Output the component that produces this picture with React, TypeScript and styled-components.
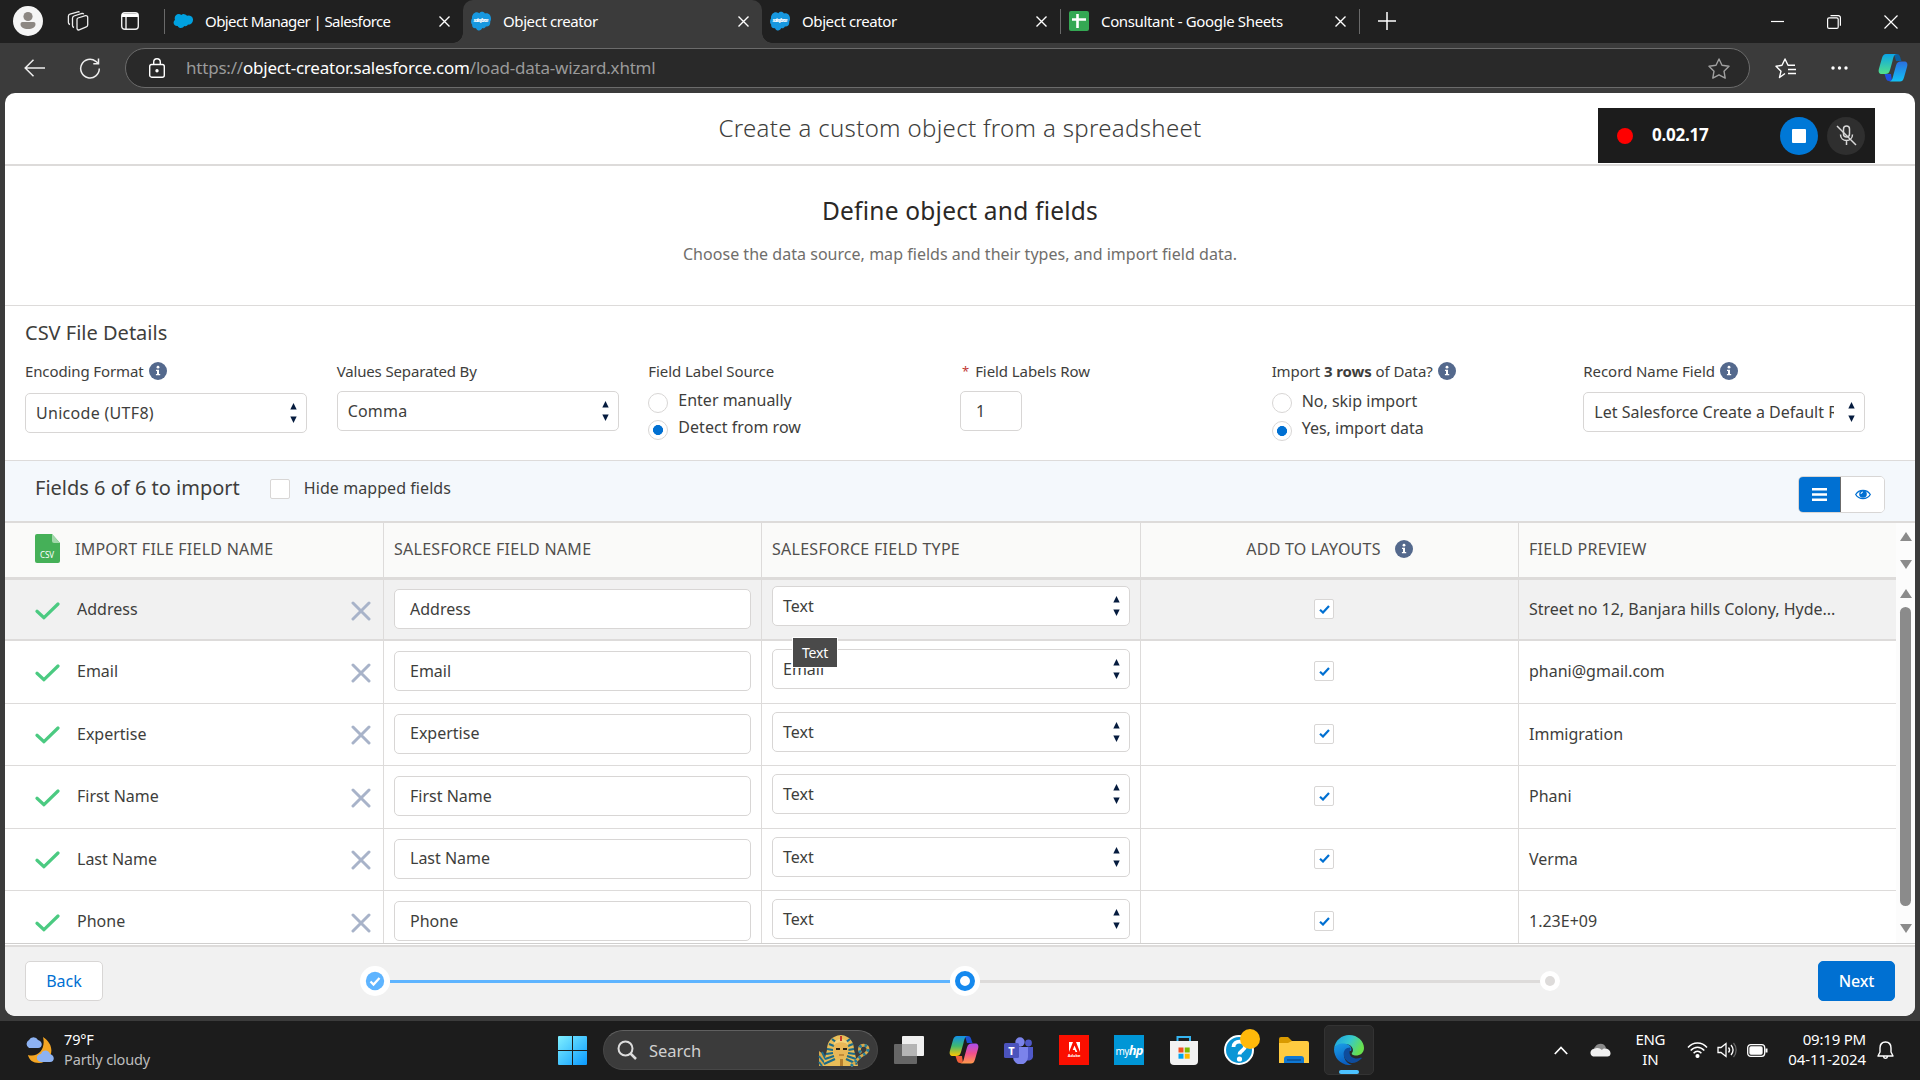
import React from "react";
import styled, { createGlobalStyle, css } from "styled-components";

const Global = createGlobalStyle`
  * { box-sizing: border-box; }
  html, body { margin: 0; padding: 0; background: #3b3b3b; }
  body { width: 1920px; height: 1080px; overflow: hidden; font-family: "Noto Sans", "Open Sans", sans-serif; }
  svg { display: block; flex: none; }
`;

const Screen = styled.div`
  width: 1920px;
  height: 1080px;
  display: flex;
  flex-direction: column;
  background: #3b3b3b;
  overflow: hidden;
`;

/* ---------- shared text ---------- */
const Label = styled.span<{ $size?: number; $track?: number; $color?: string; $weight?: number }>`
  font-size: ${(p) => p.$size ?? 16}px;
  letter-spacing: ${(p) => p.$track ?? 0}px;
  color: ${(p) => p.$color ?? "#3e3e3c"};
  font-weight: ${(p) => p.$weight ?? 400};
  line-height: 20px;
  white-space: nowrap;
`;

/* ---------- browser chrome ---------- */
const TabStrip = styled.div`
  height: 43px;
  background: #202020;
  display: flex;
  flex: none;
  padding-left: 13px;
`;
const StripTools = styled.div`
  width: 151px;
  display: flex;
  align-items: center;
  padding-bottom: 1px;
  flex: none;
`;
const ToolSlot = styled.div<{ $ml: number }>`
  margin-left: ${(p) => p.$ml}px;
`;
const Tab = styled.div<{ $width: number; $active?: boolean }>`
  width: ${(p) => p.$width}px;
  display: flex;
  align-items: center;
  flex: none;
  padding: 0 13px 1px 8px;
  color: #fff;
  ${(p) => p.$active && css`
    position: relative;
    background: #3b3b3b;
    border-radius: 10px 10px 0 0;
    &::before, &::after {
      content: "";
      position: absolute;
      bottom: 0;
      width: 10px;
      height: 10px;
    }
    &::before { left: -10px; background: radial-gradient(circle at 0 0, transparent 9.5px, #3b3b3b 10px); }
    &::after { right: -10px; background: radial-gradient(circle at 100% 0, transparent 9.5px, #3b3b3b 10px); }
  `}
`;
const TabTitle = styled.span<{ $track: number }>`
  flex: 1;
  margin-left: 12px;
  margin-top: -1px;
  font-size: 15px;
  letter-spacing: ${(p) => p.$track}px;
  white-space: nowrap;
`;
const StripRule = styled.div`
  width: 1px;
  height: 25px;
  margin-top: 9px;
  background: #6a6a6a;
  flex: none;
`;
const WindowButtons = styled.div`
  margin-left: auto;
  display: flex;
  align-items: center;
  gap: 43px;
  padding-right: 22px;
`;
const NewTab = styled.div`
  margin: 12px 0 0 18px;
`;
const Toolbar = styled.div`
  height: 50px;
  flex: none;
  display: flex;
  align-items: center;
  padding: 0 12px 0 24px;
`;
const AddressBar = styled.div`
  width: 1625px;
  height: 40px;
  margin-left: 24px;
  border: 1px solid #6b6b6b;
  border-radius: 20px;
  background: #292929;
  display: flex;
  align-items: center;
  padding: 0 19px 0 23px;
  flex: none;
`;
const Url = styled.div`
  flex: 1;
  margin-left: 21px;
  margin-top: -2px;
  font-size: 17px;
  letter-spacing: -0.21px;
  color: #9a9a9a;
  white-space: nowrap;
  b { font-weight: 400; color: #fff; }
`;
const ToolbarRight = styled.div`
  display: flex;
  align-items: center;
  margin-left: 25px;
  gap: 35px;
`;
const CopilotSlot = styled.div`
  margin-left: -5px;
`;

/* ---------- page ---------- */
const Page = styled.main`
  width: 1910px;
  height: 923px;
  margin-left: 5px;
  background: #fff;
  border-radius: 10px;
  overflow: hidden;
  display: flex;
  flex-direction: column;
  flex: none;
  position: relative;
`;
const TitleBar = styled.header`
  height: 73px;
  flex: none;
  border-bottom: 2px solid #dddbda;
  display: flex;
  justify-content: center;
  align-items: center;
`;
const PageTitle = styled.h1`
  margin: 0 0 3px;
  font-size: 24px;
  font-weight: 300;
  letter-spacing: 0.33px;
  color: #3e3e3c;
  white-space: nowrap;
`;
const Intro = styled.section`
  height: 140px;
  flex: none;
  border-bottom: 1px solid #dddbda;
  display: flex;
  flex-direction: column;
  align-items: center;
  padding-top: 29px;
`;
const IntroTitle = styled.h2`
  margin: 0 0 17px;
  font-size: 24.5px;
  letter-spacing: 0.22px;
  line-height: 32px;
  font-weight: 400;
  color: #2b2826;
  white-space: nowrap;
`;
const Details = styled.section`
  height: 155px;
  flex: none;
  padding: 15px 20px 0;
  border-bottom: 1px solid #dddbda;
`;
const DetailsTitle = styled.h3`
  margin: 0;
  font-size: 20px;
  line-height: 24px;
  font-weight: 400;
  color: #3e3e3c;
`;
const DetailGrid = styled.div`
  margin-top: 15px;
  display: grid;
  grid-template-columns: repeat(6, 311.67px);
`;
const Field = styled.div`
  display: flex;
  flex-direction: column;
`;
const FieldLabel = styled.div`
  height: 22px;
  display: flex;
  align-items: center;
  gap: 5px;
`;
const SelectBox = styled.div<{ $top?: number; $width?: string }>`
  width: ${(p) => p.$width ?? "282px"};
  height: 40px;
  margin-top: ${(p) => p.$top ?? 0}px;
  border: 1px solid #d8d6d5;
  border-radius: 5px;
  background: #fff;
  display: flex;
  align-items: center;
  justify-content: space-between;
  padding: 0 9px 0 10px;
`;
const Clip = styled.div<{ $max?: number }>`
  max-width: ${(p) => p.$max ?? 300}px;
  overflow: hidden;
  display: flex;
`;
const SmallInput = styled.div`
  width: 62px;
  height: 40px;
  margin-top: 9px;
  border: 1px solid #d8d6d5;
  border-radius: 5px;
  display: flex;
  align-items: center;
  padding-left: 15px;
`;
const Required = styled.span`
  color: #c23934;
  font-size: 13px;
  line-height: 20px;
  margin: 0 1px 0 2px;
`;
const RadioRow = styled.div<{ $top: number; $lift: number }>`
  display: flex;
  align-items: center;
  gap: 10px;
  height: 20px;
  margin-top: ${(p) => p.$top}px;
  span { margin-top: ${(p) => -p.$lift * 2}px; }
`;
const Radio = styled.i<{ $on?: boolean }>`
  width: 20px;
  height: 20px;
  border: 1px solid #d8d6d5;
  border-radius: 50%;
  background: ${(p) => (p.$on ? "radial-gradient(circle, #0070d2 0 4.7px, #fff 5.3px)" : "#fff")};
`;
const Filter = styled.section`
  height: 62px;
  flex: none;
  background: #f4f8fc;
  border-bottom: 2px solid #dddbda;
  display: flex;
  padding: 0 30px;
`;
const FilterLeft = styled.div`
  display: flex;
  align-items: center;
  height: 53px;
`;
const CheckBox = styled.div`
  width: 20px;
  height: 20px;
  border: 1px solid #d8d6d5;
  border-radius: 2px;
  background: #fff;
  display: flex;
  align-items: center;
  justify-content: center;
`;
const HideBox = styled(CheckBox)`
  margin: 3px 14px 0 30px;
`;
const Toggle = styled.div`
  margin: 15px 0 0 auto;
  width: 87px;
  height: 37px;
  display: flex;
  border: 1px solid #d8d6d5;
  border-radius: 5px;
  overflow: hidden;
`;
const ToggleItem = styled.div<{ $on?: boolean }>`
  width: ${(p) => (p.$on ? 42 : 43)}px;
  display: flex;
  align-items: center;
  justify-content: center;
  background: ${(p) => (p.$on ? "#0070d2" : "#fff")};
  border-right: ${(p) => (p.$on ? "1px solid #6b6b6b" : "0")};
`;

/* ---------- table ---------- */
const TableArea = styled.section`
  height: 421px;
  flex: none;
  display: flex;
  border-bottom: 1px solid #d0cfce;
`;
const Table = styled.div`
  width: 1891px;
  overflow: hidden;
`;
const rowGrid = css`
  display: grid;
  grid-template-columns: 379px 378px 379px 378px 377px;
`;
const HeadRow = styled.div`
  ${rowGrid}
  height: 57px;
  background: #fafaf9;
  border-bottom: 3px solid #dddbda;
`;
const Row = styled.div<{ $hover?: boolean }>`
  ${rowGrid}
  height: ${(p) => (p.$hover ? 61 : 62.5)}px;
  background: ${(p) => (p.$hover ? "#f1f1f1" : "#fff")};
  border-bottom: ${(p) => (p.$hover ? 2 : 1)}px solid #dddbda;
`;
const Cell = styled.div<{ $center?: boolean; $last?: boolean }>`
  padding: 0 10px 1px;
  display: flex;
  align-items: center;
  justify-content: ${(p) => (p.$center ? "center" : "flex-start")};
  border-right: ${(p) => (p.$last ? 0 : 1)}px solid #dddbda;
`;
const HeadCell = styled(Cell)`
  padding-bottom: 3px;
`;
const NameCell = styled(Cell)`
  padding: 0 12px 1px 30px;
  > span { flex: 1; }
`;
const NameHead = styled(NameCell)`
  padding-bottom: 3px;
`;
const TopCell = styled(Cell)<{ $pad: number }>`
  align-items: flex-start;
  padding-top: ${(p) => p.$pad}px;
`;
const TextInput = styled.div`
  width: 358px;
  height: 40px;
  border: 1px solid #d8d6d5;
  border-radius: 5px;
  background: #fff;
  display: flex;
  align-items: center;
  padding: 0 15px 1px;
`;
const CheckSlot = styled.div`
  margin-right: 11px;
`;
const HeadIcon = styled.div`
  margin-right: 15px;
`;
const RowIcon = styled.div<{ $mr?: number }>`
  margin: 3px ${(p) => p.$mr ?? 0}px 0 0;
`;
const InfoSlot = styled.div`
  margin-left: 14px;
`;
const ScrollColumn = styled.div`
  width: 19px;
  background: #fcfcfc;
  display: flex;
  flex-direction: column;
  align-items: center;
`;
const Arrow = styled.i<{ $down?: boolean; $mt: number }>`
  margin-top: ${(p) => p.$mt}px;
  border: 6px solid transparent;
  border-${(p) => (p.$down ? "bottom" : "top")}: 0;
  border-${(p) => (p.$down ? "top" : "bottom")}: 9px solid #8b8b8b;
  flex: none;
`;
const Thumb = styled.i`
  width: 11px;
  height: 299px;
  margin-top: 9px;
  border-radius: 6px;
  background: #8b8b8b;
  flex: none;
`;
const Tooltip = styled.div`
  position: absolute;
  left: 787px;
  top: 544px;
  width: 46px;
  height: 31px;
  background: #4a4a4a;
  border: 1px solid #fff;
  display: flex;
  align-items: center;
  justify-content: center;
`;

/* ---------- wizard footer ---------- */
const Footer = styled.footer`
  height: 71px;
  margin-top: 1px;
  flex: none;
  border-top: 2px solid #dddbda;
  background: #f1f1f1;
  display: flex;
  align-items: center;
  padding: 0 20px 1px;
`;
const Button = styled.div<{ $primary?: boolean }>`
  width: ${(p) => (p.$primary ? 77 : 78)}px;
  height: 40px;
  border: 1px solid ${(p) => (p.$primary ? "#0070d2" : "#d8d6d5")};
  border-radius: 5px;
  background: ${(p) => (p.$primary ? "#0070d2" : "#fff")};
  display: flex;
  align-items: center;
  justify-content: center;
  flex: none;
`;
const Progress = styled.div`
  display: flex;
  align-items: center;
  margin: 0 auto 0 257px;
`;
const Line = styled.i<{ $done?: boolean; $width: number }>`
  width: ${(p) => p.$width}px;
  height: 3px;
  background: ${(p) => (p.$done ? "#5eb4ff" : "#dddbda")};
`;

/* ---------- recorder overlay ---------- */
const Recorder = styled.div`
  position: absolute;
  left: 1593px;
  top: 15px;
  width: 277px;
  height: 55px;
  background: #1c1c1c;
  display: flex;
  align-items: center;
  padding: 0 10px 0 19px;
`;
const RecDot = styled.i`
  width: 16px;
  height: 16px;
  border-radius: 50%;
  background: #f00;
  margin-right: 19px;
`;
const RoundButton = styled.div<{ $bg: string }>`
  width: 38px;
  height: 38px;
  border-radius: 50%;
  background: ${(p) => p.$bg};
  display: flex;
  align-items: center;
  justify-content: center;
`;
const StopSquare = styled.i`
  width: 14px;
  height: 14px;
  border-radius: 1px;
  background: #fff;
`;
const RecTime = styled.span`
  flex: 1;
  color: #fff;
  font-size: 17px;
  font-weight: 700;
  letter-spacing: -0.25px;
  margin-top: -2px;
`;
const RecButtons = styled.div`
  display: flex;
  gap: 9px;
`;

/* ---------- taskbar ---------- */
const Taskbar = styled.div`
  height: 59px;
  margin-top: 5px;
  background: #1c1c1c;
  flex: none;
  display: flex;
  align-items: center;
  padding: 0 26px 1px 24px;
`;
const Weather = styled.div`
  width: 534px;
  display: flex;
  gap: 9px;
  align-items: center;
`;
const Stack = styled.div<{ $align?: string }>`
  display: flex;
  flex-direction: column;
  align-items: ${(p) => p.$align ?? "flex-start"};
  margin-top: -2px;
`;
const SearchPill = styled.div`
  width: 275px;
  height: 40px;
  margin: 0 8px 0 16px;
  border-radius: 20px;
  background: #3b3b3b;
  border: 1px solid #474747;
  border-top-color: #606060;
  display: flex;
  align-items: center;
  padding: 0 7px 0 13px;
  flex: none;
`;
const SearchText = styled.span`
  flex: 1;
  margin-left: 12px;
  font-size: 16.5px;
  color: #d0d0d0;
`;
const Apps = styled.div`
  display: flex;
  gap: 5px;
  margin-left: -2px;
`;
const AppTile = styled.div<{ $active?: boolean }>`
  width: 50px;
  height: 50px;
  border-radius: 5px;
  display: flex;
  align-items: center;
  justify-content: center;
  position: relative;
  ${(p) => p.$active && css`
    background: #292929;
    border: 1px solid #333;
    &::after {
      content: "";
      position: absolute;
      left: 14px;
      bottom: 0;
      width: 20px;
      height: 4px;
      border-radius: 2px;
      background: #4cc2ff;
    }
  `}
`;
const Square = styled.div<{ $bg: string }>`
  width: 30px;
  height: 30px;
  background: ${(p) => p.$bg};
  display: flex;
  flex-direction: column;
  align-items: center;
  justify-content: center;
  color: #fff;
`;
const HpText = styled.span`
  font-size: 10px;
  letter-spacing: -0.6px;
  line-height: 14px;
  i { font-weight: 700; font-size: 13px; letter-spacing: -1px; }
`;
const AdobeText = styled.span`
  font-size: 4px;
  font-weight: 700;
  line-height: 5px;
`;
const Tray = styled.div`
  margin-left: auto;
  display: flex;
  align-items: center;
`;
const TraySlot = styled.div<{ $mr: number }>`
  margin-right: ${(p) => p.$mr}px;
`;

/* ---------- icons ---------- */
const Close = () => (
  <svg width="11" height="11" viewBox="0 0 11 11" stroke="#fff" strokeWidth="1.4"><path d="M.5.5l10 10M10.5.5l-10 10" /></svg>
);
const Cloud = ({ wordmark }: { wordmark?: boolean }) => (
  wordmark ? (
    <svg width="20" height="20" viewBox="0 0 20 20">
      <path fill="#1798e0" d="M8.300 2.200c1.600-2 4.500-1.900 5.700.3 3.200-1 6 1.400 6 5 0 1.500-.3 2.300-.8 3.200.5 3.300-1.700 5.300-4.300 4.800-.8 1.600-2.200 2.100-3.700 1.500-.9 3.200-5 3.400-6.200.2-2.400.5-4.200-1-3.800-3.600C-.3 12.300-.3 9.200 1 7.600.4 3 5-.6 8.300 2.200z" />
      <text x="10" y="11" textAnchor="middle" fontSize="5" fontWeight="700" fontStyle="italic" fill="#fff" textLength="15">salesforce</text>
    </svg>
  ) : (
    <svg width="20" height="16" viewBox="0 0 20 16">
      <path fill="#00a1e0" d="M8.3 1.9A4 4 0 0 1 14 2.8a4.3 4.3 0 0 1 6 4.3c0 3-2.500 5-5 4.500-.8 1.400-2.300 1.900-3.800 1.300-.9 2.400-5.200 2.900-6.500 0C2.300 13.200.6 11.600.6 9.700c0-1.200.5-2.200 1.400-2.800C.4 2.600 5-.5 8.300 1.900z" />
    </svg>
  )
);
const Sheets = () => (
  <svg width="20" height="20" viewBox="0 0 20 20"><rect width="20" height="20" rx="2" fill="#34a853" /><path d="M8.500 3v14M3 8.500h14" stroke="#fff" strokeWidth="2.600" /></svg>
);
const Info = () => (
  <svg width="18" height="18" viewBox="0 0 18 18"><circle cx="9" cy="9" r="9" fill="#54698d" /><circle cx="9" cy="5.200" r="1.400" fill="#fff" /><path d="M7 7.700h3v4.300h1.200v1.300H6.900V12H8V9H7z" fill="#fff" /></svg>
);
const Updown = () => (
  <svg width="7" height="20" viewBox="0 0 7 20" fill="#061c3f"><path d="M3.500 0L6.700 6.500H.3zM3.500 20L.3 13.500h6.400z" /></svg>
);
const Tick = () => (
  <svg width="11" height="9" viewBox="0 0 11 9" fill="none" stroke="#0070d2" strokeWidth="2.200"><path d="M1 4.700L4 7.500 10 1" /></svg>
);
const GreenTick = () => (
  <svg width="25" height="18" viewBox="0 0 25 18" fill="none" stroke="#4bca81" strokeWidth="3.200" strokeLinecap="round" strokeLinejoin="round"><path d="M2 9.300L9 15.700 23 2" /></svg>
);
const GreyCross = () => (
  <svg width="20" height="20" viewBox="0 0 20 20" strokeWidth="3" strokeLinecap="round"><path d="M2 2l16 16M18 2L2 18" stroke="#a8b3c9" /></svg>
);
const CsvFile = () => (
  <svg width="25" height="29" viewBox="0 0 25 29">
    <path d="M2 0h15l8 9v18a2 2 0 0 1-2 2H2a2 2 0 0 1-2-2V2a2 2 0 0 1 2-2z" fill="#45b058" />
    <path d="M17 0l8 9h-6a2 2 0 0 1-2-2z" fill="#a2d8ab" />
    <text x="12" y="24" textAnchor="middle" fontSize="8" fill="#fff">CSV</text>
  </svg>
);
const Copilot = ({ blue }: { blue?: boolean }) => {
  const id = blue ? "cb" : "cc";
  return (
    <svg width="30" height="30" viewBox="0 0 30 30">
      <defs>
        <linearGradient id={id + "l"} x1="0" y1="0" x2="0" y2="1">
          {blue ? <><stop offset="0" stopColor="#0aa5e8" /><stop offset="1" stopColor="#52e08a" /></> : <><stop offset="0" stopColor="#1290e8" /><stop offset=".5" stopColor="#3fb870" /><stop offset="1" stopColor="#ffc800" /></>}
        </linearGradient>
        <linearGradient id={id + "r"} x1="0" y1="0" x2="0" y2="1">
          {blue ? <><stop offset="0" stopColor="#2a6fe0" /><stop offset="1" stopColor="#12c2f5" /></> : <><stop offset="0" stopColor="#a84df0" /><stop offset=".5" stopColor="#f0508c" /><stop offset="1" stopColor="#ff9a4a" /></>}
        </linearGradient>
      </defs>
      <path d="M16 1h3c3 0 3 3 4.500 7H18z" fill={blue ? "#0b5fa0" : "#1b4fd0"} />
      <path d="M14 28h-3c-3 0-3-3-4.500-7H13z" fill={blue ? "#1e50e0" : "#f0603a"} />
      <path d="M8 1h11c-3 0-3.500 3-4.500 7l-2.500 9c-1 3-2 4-5 4H4c-3 0-4-2-3-5.500L4 5c1-3 2-4 4-4z" fill={`url(#${id}l)`} />
      <path d="M22 28.500H11c3 0 3.500-3 4.500-7L18 12.500c1-3 2-4 5-4h3c3 0 4 2 3 5.500L26 24.500c-1 3-2 4-4 4z" fill={`url(#${id}r)`} />
    </svg>
  );
};
const Pharaoh = () => (
  <svg width="52" height="33" viewBox="0 0 52 33">
    <path d="M1 32V17l4 3 6 12z" fill="#d9a94a" /><path d="M1 22l7 9M1 28l3 4M4 18l4 8" stroke="#1f6f8c" strokeWidth="2" />
    <path d="M23 1C13 2 9 8 9 16L5 32h35l-4-16C36 8 32 2 23 1z" fill="#e8bd58" />
    <path d="M11 10l5 2M9 15l6 1M8 20l7-1M7 25l9-3M6 30l11-5M35 10l-5 2M36 15l-6 1M37 20l-7-1M38 25l-9-3M39 30l-11-5M14 5l5 4M32 5l-5 4" stroke="#1b6b8a" strokeWidth="2.200" />
    <ellipse cx="23" cy="16" rx="7.500" ry="9" fill="#e9b757" /><path d="M15.500 12c2-5 13-5 15 0l-1-4c-3-4-10-4-13 0z" fill="#f4d27a" />
    <path d="M18 15h4M25 15h4" stroke="#2b2416" strokeWidth="1.800" /><path d="M21 21h5" stroke="#a86e25" strokeWidth="1.200" /><path d="M23 2v5" stroke="#c63b2b" strokeWidth="2" /><path d="M22 25h3v7h-3z" fill="#b77f2c" />
    <path d="M33 32l9-9c3-3 8-3 8-8 0-4-6-5-8-2-1 2-1 4 1 6" fill="none" stroke="#d9a94a" strokeWidth="2.800" /><path d="M33 32l9-9c3-3 8-3 8-8 0-4-6-5-8-2-1 2-1 4 1 6" fill="none" stroke="#1f7fa0" strokeWidth="2.800" strokeDasharray="2.500 3" />
  </svg>
);
const Edge = () => (
  <svg width="30" height="30" viewBox="0 0 30 30">
    <defs>
      <linearGradient id="eg" x1="0" y1="0" x2="1" y2=".4"><stop offset="0" stopColor="#1b9de2" /><stop offset=".55" stopColor="#35c8cf" /><stop offset="1" stopColor="#68e04e" /></linearGradient>
      <linearGradient id="eb" x1="0" y1="0" x2=".3" y2="1"><stop offset="0" stopColor="#1ba0e8" /><stop offset="1" stopColor="#0a5fc2" /></linearGradient>
    </defs>
    <path d="M0 14C1 5 8 0 15 0c9 0 15 6.500 15 13 0 5-4 7.500-8 7.500-3 0-5-1.200-4-2.500 3-4-1-9-7-9S1 11 0 14z" fill="url(#eg)" />
    <path d="M0 14c1-4 6-6 10-5.500 6 .5 8.500 4.500 7 7.500-4-2-8 2-6.500 7 1 3.500 4 6 7.500 7C8 31 0 24 0 14z" fill="url(#eb)" />
    <path d="M16 12.500c-5 0-8 5-5.500 10C13 28 20 31 27.500 23.500c1-1-.3-1-1-.7-5 2-11-.3-11-5.300 0-2 1-3 1-4z" fill="#0f4c9c" />
  </svg>
);
const Teams = () => (
  <svg width="30" height="27" viewBox="0 0 30 27">
    <circle cx="24.500" cy="6" r="3.400" fill="#5059c9" /><path d="M20 10h9v8a4.500 4.500 0 0 1-9 2z" fill="#5059c9" />
    <circle cx="16" cy="5" r="4.700" fill="#7b83eb" /><path d="M9 10h15v10a7 7 0 0 1-15 0z" fill="#7b83eb" />
    <rect y="6" width="15" height="15" rx="1.500" fill="#4b53bc" />
    <text x="7.500" y="17.500" textAnchor="middle" fontSize="11" fontWeight="700" fill="#fff">T</text>
  </svg>
);
const Store = () => (
  <svg width="30" height="30" viewBox="0 0 30 30">
    <path d="M8.500 7V2h12.500v5" fill="none" stroke="#35b4f0" strokeWidth="2" /><path d="M1 6h28v20a4 4 0 0 1-4 4H5a4 4 0 0 1-4-4z" fill="#f2f2f2" />
    <path fill="#f25022" d="M9.500 12.500h5v5h-5z" /><path fill="#7fba00" d="M15.700 12.500h5v5h-5z" /><path fill="#00a4ef" d="M9.500 18.700h5v5h-5z" /><path fill="#ffb900" d="M15.700 18.700h5v5h-5z" />
  </svg>
);
const Help = () => (
  <svg width="36" height="36" viewBox="0 0 36 36">
    <circle cx="15" cy="21" r="14" fill="#0a96d6" stroke="#fff" strokeWidth="2" />
    <path d="M9.500 18c0-7 11.500-7 11.500-.5 0 4-5.500 4-5.500 8" fill="none" stroke="#fff" strokeWidth="3.800" /><circle cx="15.500" cy="30" r="2.600" fill="#fff" />
    <circle cx="26" cy="10" r="10" fill="#ffb90a" />
  </svg>
);
const HelpSlot = styled.div`
  margin: -6px 0 0 6px;
`;
const Folder = () => (
  <svg width="30" height="27" viewBox="0 0 30 27">
    <path d="M0 2a2 2 0 0 1 2-2h7l4 4v4H0z" fill="#d99a00" /><path d="M0 6h9l4-2h15a2 2 0 0 1 2 2v20H0z" fill="#ffcb40" />
    <path d="M5 26v-4a3 3 0 0 1 3-3h14a3 3 0 0 1 3 3v4z" fill="#0f78d4" /><path d="M8 23h14" stroke="#0b4f93" strokeWidth="1.500" />
  </svg>
);
const AdobeMark = () => (
  <svg width="11" height="11" viewBox="0 0 11 11" fill="#fff"><path d="M0 0h4L0 10zM11 0H7l4 10zM5.500 3.500L8.300 10H6.500L5.700 8H3.700z" /></svg>
);

const fields = [
  ["Address", "Text", "Street no 12, Banjara hills Colony, Hyde..."],
  ["Email", "Email", "phani@gmail.com"],
  ["Expertise", "Text", "Immigration"],
  ["First Name", "Text", "Phani"],
  ["Last Name", "Text", "Verma"],
  ["Phone", "Text", "1.23E+09"],
];

export default function App() {
  return (
    <Screen>
      <Global />
      <TabStrip>
        <StripTools>
          <svg width="30" height="30" viewBox="0 0 30 30"><circle cx="15" cy="15" r="15" fill="#f5f5f5" /><circle cx="15" cy="10.500" r="4.600" fill="#8c8782" /><path d="M9.500 16h11a2 2 0 0 1 2 2c0 3.500-3 5-7.500 5s-7.500-1.500-7.500-5a2 2 0 0 1 2-2z" fill="#8c8782" /></svg>
          <ToolSlot $ml={24}>
            <svg width="22" height="20" viewBox="0 0 22 20" fill="none" stroke="#eee" strokeWidth="1.300"><path d="M11 7l7.500-2.300a1.700 1.700 0 0 1 2.200 1.700V14a2 2 0 0 1-1.400 1.900L12.200 18.900a1.700 1.700 0 0 1-2.200-1.700V8.500A1.600 1.600 0 0 1 11 7z" /><path d="M7 16.500A2 2 0 0 1 5.500 14.500V7.500A2.500 2.500 0 0 1 7 5L15 2.500a1.500 1.500 0 0 1 1.700.8M3 13.500a2 2 0 0 1-1.600-2V5.500A2.500 2.500 0 0 1 3 3L11 .8a1.500 1.500 0 0 1 1.500.4" /></svg>
          </ToolSlot>
          <ToolSlot $ml={32}>
            <svg width="18" height="18" viewBox="0 0 18 18" fill="none" stroke="#eee" strokeWidth="1.400"><rect x=".7" y=".7" width="16.600" height="16.600" rx="3" /><path d="M5 5v12" /><path d="M1 1.500h16V5H1z" fill="#fff" stroke="none" /></svg>
          </ToolSlot>
        </StripTools>
        <StripRule />
        <Tab $width={298}>
          <Cloud />
          <TabTitle $track={-0.59}>Object Manager | Salesforce</TabTitle>
          <Close />
        </Tab>
        <Tab $width={299} $active>
          <Cloud wordmark />
          <TabTitle $track={-0.4}>Object creator</TabTitle>
          <Close />
        </Tab>
        <Tab $width={298}>
          <Cloud wordmark />
          <TabTitle $track={-0.4}>Object creator</TabTitle>
          <Close />
        </Tab>
        <StripRule />
        <Tab $width={298}>
          <Sheets />
          <TabTitle $track={-0.35}>Consultant - Google Sheets</TabTitle>
          <Close />
        </Tab>
        <StripRule />
        <NewTab><svg width="18" height="18" viewBox="0 0 18 18" stroke="#fff" strokeWidth="1.500"><path d="M9 0v18M0 9h18" /></svg></NewTab>
        <WindowButtons>
          <svg width="13" height="13" viewBox="0 0 13 13" stroke="#fff" strokeWidth="1.200"><path d="M0 6.500h13" /></svg>
          <svg width="14" height="14" viewBox="0 0 14 14" fill="none" stroke="#fff" strokeWidth="1.200"><rect x=".6" y="2.800" width="10.600" height="10.600" rx="1.500" /><path d="M3.500.6h7.800a2.100 2.100 0 0 1 2.100 2.100v8" /></svg>
          <svg width="14" height="14" viewBox="0 0 14 14" stroke="#fff" strokeWidth="1.200"><path d="M.5.5l13 13M13.500.5l-13 13" /></svg>
        </WindowButtons>
      </TabStrip>

      <Toolbar>
        <svg width="21" height="18" viewBox="0 0 21 18" fill="none" stroke="#eee" strokeWidth="1.500"><path d="M21 9H1M9.500.7L1.200 9l8.300 8.300" /></svg>
        <ToolSlot $ml={34}>
          <svg width="22" height="21" viewBox="0 0 22 21" fill="none" stroke="#eee" strokeWidth="1.500"><path d="M20.300 10.500a9.300 9.300 0 1 1-3.500-7.200l2.500 2.200M19.500.5v5.200h-5.200" /></svg>
        </ToolSlot>
        <AddressBar>
          <svg width="16" height="20" viewBox="0 0 16 20" fill="none" stroke="#fff" strokeWidth="1.400"><rect x=".7" y="6.500" width="14.600" height="12.700" rx="2" /><path d="M4.700 6.500V4a3.300 3.300 0 0 1 6.600 0v2.500" /><circle cx="8" cy="12.800" r="1" fill="#fff" /></svg>
          <Url>https://<b>object-creator.salesforce.com</b>/load-data-wizard.xhtml</Url>
          <svg width="22" height="21" viewBox="0 0 22 21" fill="none" stroke="#a0a0a0" strokeWidth="1.400" strokeLinejoin="round"><path d="M11 1l3 6.300 7 1-5 4.900 1.200 6.900L11 16.800l-6.200 3.300L6 13.200 1 8.300l7-1z" /></svg>
        </AddressBar>
        <ToolbarRight>
          <svg width="21" height="21" viewBox="0 0 21 21" fill="none" stroke="#fff" strokeWidth="1.400" strokeLinejoin="round"><path d="M10 15.500L4.500 19.500 6 13.200 1 8.300l6-1L10 1l3 6.300h7M13 11.500h8M13 15.500h8" /></svg>
          <svg width="17" height="4" viewBox="0 0 17 4" fill="#fff"><circle cx="2" cy="2" r="1.700" /><circle cx="8.500" cy="2" r="1.700" /><circle cx="15" cy="2" r="1.700" /></svg>
          <CopilotSlot><Copilot blue /></CopilotSlot>
        </ToolbarRight>
      </Toolbar>

      <Page>
        <TitleBar><PageTitle>Create a custom object from a spreadsheet</PageTitle></TitleBar>
        <Intro>
          <IntroTitle>Define object and fields</IntroTitle>
          <Label $color="#706e6b" $track={0.03}>Choose the data source, map fields and their types, and import field data.</Label>
        </Intro>

        <Details>
          <DetailsTitle>CSV File Details</DetailsTitle>
          <DetailGrid>
            <Field>
              <FieldLabel><Label $size={15} $track={-0.12}>Encoding Format</Label><Info /></FieldLabel>
              <SelectBox $top={11}><Label $track={0.3}>Unicode (UTF8)</Label><Updown /></SelectBox>
            </Field>
            <Field>
              <FieldLabel><Label $size={15} $track={-0.15}>Values Separated By</Label></FieldLabel>
              <SelectBox $top={9}><Label $track={0.2}>Comma</Label><Updown /></SelectBox>
            </Field>
            <Field>
              <FieldLabel><Label $size={15} $track={-0.07}>Field Label Source</Label></FieldLabel>
              <RadioRow $top={11} $lift={3}><Radio /><Label>Enter manually</Label></RadioRow>
              <RadioRow $top={7} $lift={3}><Radio $on /><Label $track={0.05}>Detect from row</Label></RadioRow>
            </Field>
            <Field>
              <FieldLabel><Required>*</Required><Label $size={15} $track={-0.07}>Field Labels Row</Label></FieldLabel>
              <SmallInput><Label>1</Label></SmallInput>
            </Field>
            <Field>
              <FieldLabel><Label $size={15} $track={-0.09}>Import <b>3 rows</b> of Data?</Label><Info /></FieldLabel>
              <RadioRow $top={11} $lift={2}><Radio /><Label>No, skip import</Label></RadioRow>
              <RadioRow $top={8} $lift={3}><Radio $on /><Label>Yes, import data</Label></RadioRow>
            </Field>
            <Field>
              <FieldLabel><Label $size={15} $track={-0.05}>Record Name Field</Label><Info /></FieldLabel>
              <SelectBox $top={10}><Clip $max={240}><Label>Let Salesforce Create a Default Record Name</Label></Clip><Updown /></SelectBox>
            </Field>
          </DetailGrid>
        </Details>

        <Filter>
          <FilterLeft>
            <Label $size={20}>Fields 6 of 6 to import</Label>
            <HideBox />
            <Label $track={0.07}>Hide mapped fields</Label>
          </FilterLeft>
          <Toggle>
            <ToggleItem $on><svg width="15" height="13" viewBox="0 0 15 13" fill="#fff"><path d="M0 0h15v2.500H0zM0 5.200h15v2.500H0zM0 10.400h15v2.500H0z" /></svg></ToggleItem>
            <ToggleItem><svg width="16" height="11" viewBox="0 0 16 11"><path d="M.7 5.500C4 0 12 0 15.300 5.500 12 11 4 11 .7 5.500z" fill="#fff" stroke="#0070d2" strokeWidth="1.300" /><circle cx="8" cy="5" r="3.800" fill="#0070d2" /><path d="M6 5a2 2 0 0 1 2-2" stroke="#fff" fill="none" /></svg></ToggleItem>
          </Toggle>
        </Filter>

        <TableArea>
          <Table>
            <HeadRow>
              <NameHead><HeadIcon><CsvFile /></HeadIcon><Label $color="#514f4d" $track={0.25}>IMPORT FILE FIELD NAME</Label></NameHead>
              <HeadCell><Label $color="#514f4d" $track={0.27}>SALESFORCE FIELD NAME</Label></HeadCell>
              <HeadCell><Label $color="#514f4d" $track={0.27}>SALESFORCE FIELD TYPE</Label></HeadCell>
              <HeadCell $center><Label $color="#514f4d" $track={0.22}>ADD TO LAYOUTS</Label><InfoSlot><Info /></InfoSlot></HeadCell>
              <HeadCell $last><Label $color="#514f4d" $track={0.27}>FIELD PREVIEW</Label></HeadCell>
            </HeadRow>
            {fields.map(([name, type, preview], i) => (
              <Row key={name} $hover={i === 0}>
                <NameCell><RowIcon $mr={17}><GreenTick /></RowIcon><Label>{name}</Label><RowIcon><GreyCross /></RowIcon></NameCell>
                <TopCell $pad={i === 0 ? 9 : 10}><TextInput><Label>{name}</Label></TextInput></TopCell>
                <TopCell $pad={i === 0 ? 6 : 8}><SelectBox $width="358px"><Label>{type}</Label><Updown /></SelectBox></TopCell>
                <Cell $center><CheckSlot><CheckBox><Tick /></CheckBox></CheckSlot></Cell>
                <Cell $last><Label>{preview}</Label></Cell>
              </Row>
            ))}
          </Table>
          <ScrollColumn>
            <Arrow $mt={9} /><Arrow $down $mt={19} /><Arrow $mt={20} />
            <Thumb />
            <Arrow $down $mt={18} />
          </ScrollColumn>
        </TableArea>

        <Footer>
          <Button><Label $color="#0070d2">Back</Label></Button>
          <Progress>
            <svg width="30" height="30" viewBox="0 0 30 30"><circle cx="15" cy="15" r="15" fill="#fff" /><circle cx="15" cy="15" r="9.200" fill="#5eb4ff" /><path d="M10.500 15.500l3 3 6-6.500" fill="none" stroke="#fff" strokeWidth="2.300" /></svg>
            <Line $done $width={560} />
            <svg width="30" height="30" viewBox="0 0 30 30"><circle cx="15" cy="15" r="15" fill="#fff" /><circle cx="15" cy="15" r="7.500" fill="none" stroke="#1589ee" strokeWidth="5" /></svg>
            <Line $width={560} />
            <svg width="20" height="20" viewBox="0 0 20 20"><circle cx="10" cy="10" r="10" fill="#fff" /><circle cx="10" cy="10" r="5" fill="#dddbda" /></svg>
          </Progress>
          <Button $primary><Label $color="#fff" $weight={500} $track={-0.1}>Next</Label></Button>
        </Footer>

        <Tooltip><Label $size={14} $color="#fff" $track={-0.2}>Text</Label></Tooltip>
        <Recorder>
          <RecDot />
          <RecTime>0.02.17</RecTime>
          <RecButtons>
            <RoundButton $bg="#0078d7"><StopSquare /></RoundButton>
            <RoundButton $bg="#2f2f2f"><svg width="21" height="21" viewBox="0 0 21 21" fill="none" stroke="#d8d8d8" strokeWidth="1.500"><rect x="7.500" y="1" width="6" height="11" rx="3" /><path d="M4.500 9.500c0 8 12 8 12 0M10.500 15.500V20M1 1l19 19" /></svg></RoundButton>
          </RecButtons>
        </Recorder>
      </Page>

      <Taskbar>
        <Weather>
          <svg width="31" height="30" viewBox="0 0 31 30"><path d="M19 2c14 9 9 25-4 26C9 28 5 25 4 20c10 3 18-6 15-18z" fill="#f5a623" /><path d="M5 13a4.500 4.500 0 0 1 0-8 5 5 0 0 1 9 0c5 1 5 8 0 8zM17 27c-6-1-5-8 0-8 2-5 8-4 9 0 5 1 5 8 0 8z" fill="#8db2f2" /></svg>
          <Stack><Label $size={14.500} $track={-0.15} $color="#fff">79°F</Label><Label $size={14.500} $track={-0.13} $color="#bdbdbd">Partly cloudy</Label></Stack>
        </Weather>
        <svg width="29" height="29" viewBox="0 0 29 29"><defs><linearGradient id="w" x1="0" y1="0" x2="1" y2="1"><stop offset="0" stopColor="#80f0ff" /><stop offset="1" stopColor="#0a9aff" /></linearGradient></defs><path fill="url(#w)" d="M0 1a1 1 0 0 1 1-1h13v14H0zM15 0h13a1 1 0 0 1 1 1v13H15zM0 15h14v14H1a1 1 0 0 1-1-1zM15 15h14v13a1 1 0 0 1-1 1H15z" /></svg>
        <SearchPill>
          <svg width="20" height="20" viewBox="0 0 20 20" fill="none" stroke="#ddd" strokeWidth="2"><circle cx="8.500" cy="8.500" r="7" /><path d="M13.500 13.500L19 19" strokeWidth="2.500" /></svg>
          <SearchText>Search</SearchText>
          <Pharaoh />
        </SearchPill>
        <Apps>
          <AppTile><svg width="30" height="28" viewBox="0 0 30 28"><rect y="8" width="23" height="20" rx="1" fill="#666" /><rect x="8" width="22" height="20" rx="1" fill="#f0f0f0" /><path d="M8 8h15v12H8z" fill="#b5b5b5" /></svg></AppTile>
          <AppTile><Copilot /></AppTile>
          <AppTile><Teams /></AppTile>
          <AppTile><Square $bg="#fa0f00"><AdobeMark /><AdobeText>Adobe</AdobeText></Square></AppTile>
          <AppTile><Square $bg="#0096d6"><HpText>my<i>hp</i></HpText></Square></AppTile>
          <AppTile><Store /></AppTile>
          <AppTile><HelpSlot><Help /></HelpSlot></AppTile>
          <AppTile><Folder /></AppTile>
          <AppTile $active><Edge /></AppTile>
        </Apps>
        <Tray>
          <TraySlot $mr={22}><svg width="14" height="9" viewBox="0 0 14 9" fill="none" stroke="#fff" strokeWidth="1.700"><path d="M.8 8L7 1.500 13.200 8" /></svg></TraySlot>
          <TraySlot $mr={24}><svg width="21" height="14" viewBox="0 0 21 14"><path d="M4 11a5 5 0 0 1 1-7c3-5 10-4 11 1l-6 5z" fill="#8a8a8a" /><path d="M3 13.500C-1 12 0 6 4 6c3-2 6-1 8 1 2-3 9-1 8.500 4-.3 1.700-1.500 2.500-3 2.500z" fill="#f0f0f0" /></svg></TraySlot>
          <TraySlot $mr={22}><Stack $align="center"><Label $size={15} $track={-0.3} $color="#fff">ENG</Label><Label $size={15} $track={-0.3} $color="#fff">IN</Label></Stack></TraySlot>
          <TraySlot $mr={9}><svg width="21" height="16" viewBox="0 0 21 16" fill="none" stroke="#fff" strokeWidth="1.500"><path d="M1 5.500c5-6 14-6 19 0M3.700 8.500c4-4.500 9.600-4.500 13.600 0M6.600 11.300c2.300-2.600 5.500-2.600 7.800 0" /><circle cx="10.500" cy="14" r="1.300" fill="#fff" /></svg></TraySlot>
          <TraySlot $mr={10}><svg width="20" height="16" viewBox="0 0 20 16" fill="none" stroke="#fff" strokeWidth="1.300"><path d="M1 5.500h3L9 1.500v13l-5-4H1z" /><path d="M11.500 5.500c1.300 1.500 1.300 3.500 0 5M14 3c2.500 3 2.500 7 0 10" /><path d="M16.500 1c3.500 4 3.500 10 0 14" stroke="#666" /></svg></TraySlot>
          <TraySlot $mr={20}><svg width="21" height="13" viewBox="0 0 21 13" fill="none" stroke="#fff" strokeWidth="1.300"><rect x=".7" y=".7" width="17" height="11.600" rx="3" /><rect x="3" y="3" width="12" height="7" rx="1" fill="#fff" /><path d="M19.500 4.500v4" strokeWidth="2" /></svg></TraySlot>
          <TraySlot $mr={11}><Stack $align="flex-end"><Label $size={15} $track={-0.2} $color="#fff">09:19 PM</Label><Label $size={15} $track={-0.05} $color="#fff">04-11-2024</Label></Stack></TraySlot>
          <svg width="17" height="19" viewBox="0 0 17 19" fill="none" stroke="#fff" strokeWidth="1.400" strokeLinejoin="round"><path d="M8.500 1C5 1 3 3.500 3 7v4L1 15h15l-2-4V7c0-3.500-2-6-5.500-6zM6.500 15.500c.5 2.500 3.500 2.500 4 0" /></svg>
        </Tray>
      </Taskbar>
    </Screen>
  );
}
